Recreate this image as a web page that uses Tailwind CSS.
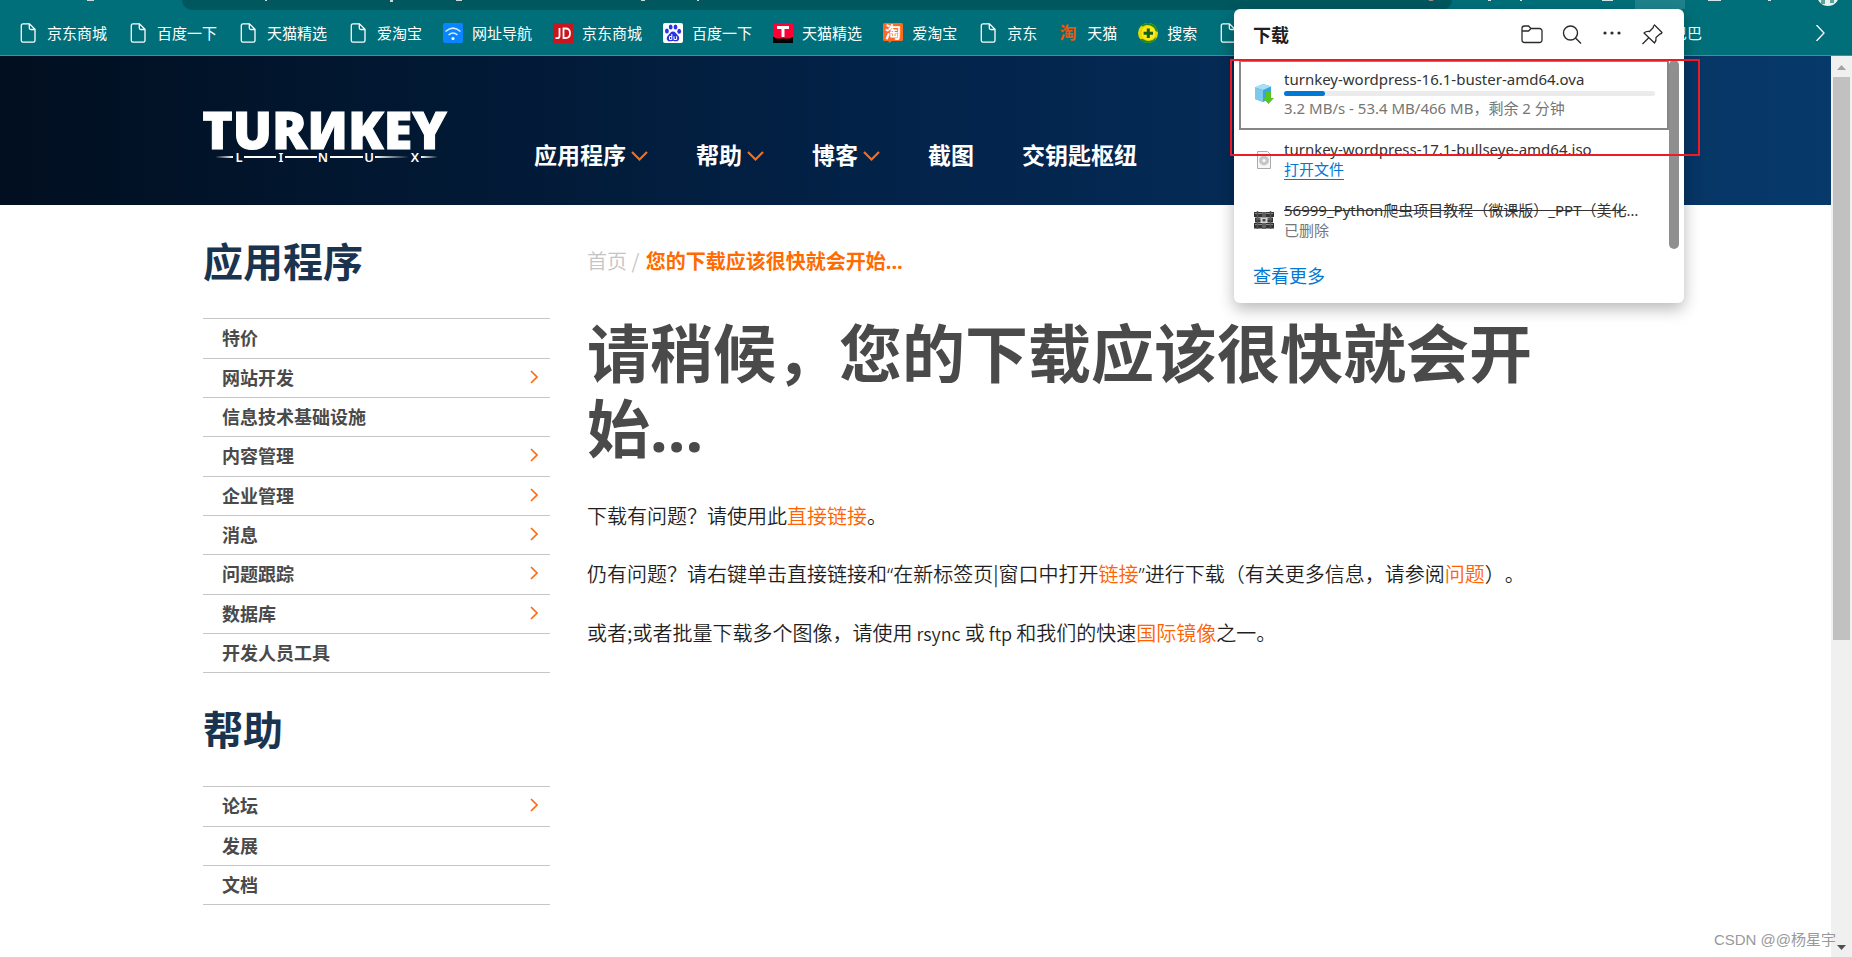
<!DOCTYPE html>
<html lang="zh-CN">
<head>
<meta charset="utf-8">
<meta name="viewport" content="width=device-width, initial-scale=1">
<title>TurnKey Linux - 下载</title>
<script src="https://cdn.jsdelivr.net/npm/@tailwindcss/browser@4"></script>
</head>
<body class="relative flex h-screen flex-col overflow-hidden bg-white font-['Noto_Sans_CJK_SC',sans-serif] text-[#1f1f1f]">

<!-- shared symbols -->
<svg class="hidden" aria-hidden="true">
  <symbol id="doc" viewBox="0 0 20 20"><path d="M5 .8h6.5L17 6.3V17.500a1.700 1.700 0 0 1-1.700 1.700H5a1.700 1.700 0 0 1-1.700-1.700v-15A1.700 1.700 0 0 1 5 .8zM11.300 1v4a1.500 1.500 0 0 0 1.500 1.500H17" fill="none" stroke="#fff" stroke-width="1.300"/></symbol>
  <symbol id="down" viewBox="0 0 17 10"><path d="M1 1l7.500 7.500L16 1" fill="none" stroke="#ff6b0f" stroke-width="2.200"/></symbol>
  <symbol id="right" viewBox="0 0 8 14"><path d="M1 1l6 6-6 6" fill="none" stroke="#ff6b0f" stroke-width="1.700"/></symbol>
</svg>

<!-- browser toolbar -->
<div class="h-[10px] shrink-0 bg-[#006f79] pr-[400px] pl-[182px]">
  <div class="h-full rounded-b-[14px] bg-[#00575e]"></div>
</div>
<div class="absolute top-0 right-[167px] h-[9px] w-[50px] bg-[#1f828b]"></div>
<svg class="absolute top-0 right-0 h-[8px] w-[460px]" viewBox="0 0 460 8" aria-hidden="true">
  <circle cx="39" cy="-3" r="4" fill="#b98f8f"/>
  <path d="M96 0h3v1h-3zM128 0h2v1h-2zM210 0h11v1h-11zM316 0h13v1h-13zM376 0h3v1h-3z" fill="#d5e5e7"/>
  <circle cx="436" cy="-5" r="11" fill="#e9f2ef"/><path d="M429 0h4v4h-4zM438 0h4v3h-4z" fill="#55a59b"/>
</svg>
<svg class="absolute top-0 left-0 h-[2px] w-[730px]" viewBox="0 0 730 2" aria-hidden="true"><path d="M87 0h7v1h-7zM265 0h2v1h-2zM390 0h3v2h-3zM456 0h6v1h-6zM641 0h4v1h-4zM697 0h2v1h-2z" fill="#c9d9da"/></svg>

<nav aria-label="收藏夹" class="flex h-[46px] shrink-0 items-center gap-[21px] overflow-hidden border-b border-[#3d9199] bg-[#006f79] pr-6 pl-[18px] text-[15px] leading-5 whitespace-nowrap text-white">
  <a href="#" class="flex items-center gap-[9px]"><svg class="size-5"><use href="#doc"/></svg>京东商城</a>
  <a href="#" class="flex items-center gap-[9px]"><svg class="size-5"><use href="#doc"/></svg>百度一下</a>
  <a href="#" class="flex items-center gap-[9px]"><svg class="size-5"><use href="#doc"/></svg>天猫精选</a>
  <a href="#" class="flex items-center gap-[9px]"><svg class="size-5"><use href="#doc"/></svg>爱淘宝</a>
  <a href="#" class="flex items-center gap-[9px]"><svg class="size-5" viewBox="0 0 20 20"><rect width="20" height="20" rx="2" fill="#0a84ff"/><path d="M2.500 8.500Q10 1.800 17.500 8.500M5.500 12Q10 8 14.500 12" fill="none" stroke="#d9ecff" stroke-width="1.500"/><circle cx="10" cy="15.500" r="1.500" fill="#fff"/></svg>网址导航</a>
  <a href="#" class="flex items-center gap-[9px]"><svg class="size-5" viewBox="0 0 20 20"><rect width="20" height="20" fill="#c9151e"/><path d="M6.500 5v8q0 2.200-2.200 2.200H2.500M10.500 5.500v9.500h2q4.500 0 4.500-4.800t-4.500-4.700z" fill="none" stroke="#fff" stroke-width="1.800"/></svg>京东商城</a>
  <a href="#" class="flex items-center gap-[9px]"><svg class="size-5" viewBox="0 0 20 20"><rect width="20" height="20" rx="2" fill="#fff"/><g fill="#2932e1"><ellipse cx="3.900" cy="8" rx="1.900" ry="2.500"/><ellipse cx="7.700" cy="4" rx="1.900" ry="2.600"/><ellipse cx="12.500" cy="4" rx="1.900" ry="2.600"/><ellipse cx="16.200" cy="8.300" rx="1.900" ry="2.500"/><path d="M10 8.500c2.200 0 3 2 5 4 2.400 2.500 1 5.800-1.700 5.800-1.500 0-2-.4-3.300-.4s-1.900.4-3.400.4c-2.700 0-4-3.300-1.600-5.800 2-2 2.800-4 5-4z"/></g><path d="M8.800 11v5.500H6.500v-3h2.300M11 13.300v3.200h2.600v-3.200" fill="none" stroke="#fff" stroke-width="1"/></svg>百度一下</a>
  <a href="#" class="flex items-center gap-[9px]"><svg class="size-5" viewBox="0 0 20 20"><rect width="20" height="20" fill="#ff0036"/><path d="M4 3h12v3h-4.500v8h-3V6H4z" fill="#fff"/><path d="M0 14h1l2 1.500h14l2-1.500h1v6H0z" fill="#000"/></svg>天猫精选</a>
  <a href="#" class="flex items-center gap-[9px]"><svg class="size-5" viewBox="0 0 20 20"><path d="M1.500 0h17A1.500 1.500 0 0 1 20 1.500v15a1.500 1.500 0 0 1-1.500 1.500H9l-3 2-.5-2h-4A1.500 1.500 0 0 1 0 16.500v-15A1.500 1.500 0 0 1 1.500 0z" fill="#fb6a22"/><text x="10" y="15" font-size="16" font-weight="700" text-anchor="middle" fill="#fff">淘</text></svg>爱淘宝</a>
  <a href="#" class="flex items-center gap-[9px]"><svg class="size-5"><use href="#doc"/></svg>京东</a>
  <a href="#" class="flex items-center gap-[9px]"><svg class="size-5" viewBox="0 0 20 20"><text x="10" y="16" font-size="17" font-weight="700" text-anchor="middle" fill="#e8590c">淘</text></svg>天猫</a>
  <a href="#" class="flex items-center gap-[9px]"><svg class="size-5" viewBox="0 0 20 20"><circle cx="10" cy="10" r="10" fill="#e8d800"/><path d="M3 3A10 10 0 0 1 20 9l-2.500-1A8 8 0 0 0 5 3.500zM2 16a10 10 0 0 0 15 1l1-3a9 9 0 0 1-13 2z" fill="#1f8a1c"/><circle cx="10.500" cy="10" r="7" fill="#ffe81a"/><path d="M8.800 5.500h3v3.200H15v3h-3.200V15h-3v-3.300H5.600v-3h3.200z" fill="#14601c"/></svg>搜索</a>
  <a href="#" aria-label="收藏" class="shrink-0"><svg class="size-5"><use href="#doc"/></svg></a>
  <a href="#" class="mr-[89px] ml-auto">阿里巴巴</a>
  <button type="button" aria-label="更多收藏" class="shrink-0"><svg class="h-4 w-4" viewBox="0 0 16 16"><path d="M4.500 0l7.500 8-7.500 8" fill="none" stroke="#fff" stroke-width="1.300"/></svg></button>
</nav>

<div class="flex min-h-0 flex-1">
  <div class="min-w-0 flex-1">
    <header class="h-[149px] bg-linear-to-r from-[#010f20] via-[#03234a] to-[#07396b]">
      <div class="mx-auto flex max-w-[1425px] items-start">
        <a href="#" aria-label="TurnKey Linux" class="mt-[54px] shrink-0">
          <svg class="h-[56px] w-[250px] font-['Noto_Sans']" viewBox="0 0 250 56" fill="#fff" stroke="#fff" stroke-width="0">
            <text x="-1" y="39" font-size="52" font-weight="900" stroke-width="1">TURИKEY</text>
            <g font-size="13" font-weight="600" text-anchor="middle"><text x="36" y="52">L</text><text x="78" y="52">I</text><text x="120" y="52">N</text><text x="166" y="52">U</text><text x="212" y="52">X</text></g>
            <path d="M12 47l18-1v2zM41 46h32v2H41zM82 46h32v2H82zM127 46h33v2h-33zM172 46l34 1-34 1zM218 46l17 1-17 1z"/>
          </svg>
        </a>
        <nav aria-label="主导航" class="mt-[82px] ml-[81px] flex gap-12 text-[23px] leading-8 font-bold whitespace-nowrap text-white">
          <a href="#" class="flex items-center gap-[5px]">应用程序<svg class="mt-1 h-[10px] w-[17px]"><use href="#down"/></svg></a>
          <a href="#" class="flex items-center gap-[5px]">帮助<svg class="mt-1 h-[10px] w-[17px]"><use href="#down"/></svg></a>
          <a href="#" class="flex items-center gap-[5px]">博客<svg class="mt-1 h-[10px] w-[17px]"><use href="#down"/></svg></a>
          <a href="#">截图</a>
          <a href="#">交钥匙枢纽</a>
        </nav>
      </div>
    </header>

    <div class="mx-auto flex max-w-[1425px] gap-[37px]">
      <aside class="w-[347px] shrink-0 text-[18px] leading-6 font-bold text-[#4a4a4a]">
        <h2 class="pt-[26px] pb-[29px] text-[40px] leading-[58px] text-[#1a344f]">应用程序</h2>
        <ul class="border-t border-[#c6c6c6] [&>li]:flex [&>li]:h-[39px] [&>li]:items-center [&>li]:justify-between [&>li]:border-b [&>li]:border-[#c6c6c6] [&>li]:pr-3 [&>li]:pb-[3px] [&>li]:pl-[19px] [&>li:nth-child(3n+1)]:h-[40px]">
          <li><a href="#">特价</a></li>
          <li><a href="#">网站开发</a><svg class="h-[14px] w-2"><use href="#right"/></svg></li>
          <li><a href="#">信息技术基础设施</a></li>
          <li><a href="#">内容管理</a><svg class="h-[14px] w-2"><use href="#right"/></svg></li>
          <li><a href="#">企业管理</a><svg class="h-[14px] w-2"><use href="#right"/></svg></li>
          <li><a href="#">消息</a><svg class="h-[14px] w-2"><use href="#right"/></svg></li>
          <li><a href="#">问题跟踪</a><svg class="h-[14px] w-2"><use href="#right"/></svg></li>
          <li><a href="#">数据库</a><svg class="h-[14px] w-2"><use href="#right"/></svg></li>
          <li><a href="#">开发人员工具</a></li>
        </ul>
        <h2 class="pt-[26px] pb-[29px] text-[40px] leading-[58px] text-[#1a344f]">帮助</h2>
        <ul class="border-t border-[#c6c6c6] [&>li]:flex [&>li]:h-[39px] [&>li]:items-center [&>li]:justify-between [&>li]:border-b [&>li]:border-[#c6c6c6] [&>li]:pr-3 [&>li]:pb-[3px] [&>li]:pl-[19px] [&>li:nth-child(3n+1)]:h-[40px]">
          <li><a href="#">论坛</a><svg class="h-[14px] w-2"><use href="#right"/></svg></li>
          <li><a href="#">发展</a></li>
          <li><a href="#">文档</a></li>
        </ul>
      </aside>

      <main class="min-w-0 flex-1 pt-[41px] text-[20px] leading-[30px] font-[350] [text-spacing-trim:space-all]">
        <p class="text-[#c4c4c4]"><a href="#">首页</a> <span class="mr-[2px]">/</span> <b class="font-bold text-[#ff6b00]">您的下载应该很快就会开始<span class="font-['Noto_Sans']">...</span></b></p>
        <h1 class="mt-[35px] text-[63px] leading-[75px] font-bold text-[#4a4a4a]">请稍候，您的下载应该很快就会开始<span class="font-['Noto_Sans']">...</span></h1>
        <p class="mt-9">下载有问题？请使用此<a href="#" class="text-[#ff6200]">直接链接</a>。</p>
        <p class="mt-7">仍有问题？请右键单击直接链接和<span class="font-['Noto_Sans']">“</span>在新标签页|窗口中打开<a href="#" class="text-[#ff6200]">链接</a><span class="font-['Noto_Sans']">”</span>进行下载（有关更多信息，请参阅<a href="#" class="text-[#ff6200]">问题</a>）。</p>
        <p class="mt-7">或者;或者批量下载多个图像，请使用<span class="text-[18px]"> rsync </span>或<span class="text-[18px]"> ftp </span>和我们的快速<a href="#" class="text-[#ff6200]">国际镜像</a>之一。</p>
      </main>
    </div>
  </div>

  <!-- page scrollbar -->
  <div class="flex w-[21px] shrink-0 flex-col items-center bg-[#f0f0f0]" aria-hidden="true">
    <svg class="h-[21px] w-full shrink-0" viewBox="0 0 21 21"><path d="M6 14l4.500-5 4.500 5z" fill="#a3a3a3"/></svg>
    <div class="w-[17px] bg-[#c1c1c1]" style="height:62.5%"></div>
    <svg class="mt-auto h-[21px] w-full shrink-0" viewBox="0 0 21 21"><path d="M6 9l4.500 5 4.500-5z" fill="#505050"/></svg>
  </div>
</div>

<!-- downloads flyout -->
<section aria-label="下载" class="absolute top-[9px] right-[168px] w-[450px] rounded-[6px] bg-white font-['Noto_Sans','Noto_Sans_CJK_SC',sans-serif] text-[15px] leading-5 shadow-[0_6px_16px_rgba(0,0,0,0.28)]">
  <div class="flex h-[51px] items-center pr-[21px] pl-[19px]">
    <h2 class="mr-auto text-[18px] font-bold">下载</h2>
    <div class="flex items-center gap-[18px]">
      <button type="button" aria-label="打开下载文件夹"><svg class="size-[22px]" viewBox="0 0 22 22" fill="none" stroke="#2b2b2b" stroke-width="1.300"><path d="M1 4.500A2.500 2.500 0 0 1 3.500 2h4l2.500 2.500h8.500A2.500 2.500 0 0 1 21 7v9a2.500 2.500 0 0 1-2.500 2.500h-15A2.500 2.500 0 0 1 1 16zM1 7h6.500L10 4.500"/></svg></button>
      <button type="button" aria-label="搜索"><svg class="size-[22px]" viewBox="0 0 22 22" fill="none" stroke="#2b2b2b" stroke-width="1.400"><circle cx="9.500" cy="9" r="7"/><path d="M14.500 14l5.500 5.500"/></svg></button>
      <button type="button" aria-label="更多"><svg class="size-[22px]" viewBox="0 0 22 22" fill="#2b2b2b"><circle cx="4" cy="9" r="1.600"/><circle cx="11" cy="9" r="1.600"/><circle cx="18" cy="9" r="1.600"/></svg></button>
      <button type="button" aria-label="固定"><svg class="size-[22px]" viewBox="0 0 22 22" fill="none" stroke="#2b2b2b" stroke-width="1.300" stroke-linejoin="round"><path d="M13.500 1l7.500 7.500q-.5 1.500-2 1.500l-4 3.500q.5 3.500-1.500 5.500l-10.500-10q2-2 5.500-1.500L12.300 3.500q-.2-1.500 1.200-2.500zM7.500 14l-6 6"/></svg></button>
    </div>
  </div>
  <div class="flex pl-[5px]">
    <ul class="min-w-0 flex-1">
      <li class="flex h-[70px] items-center gap-[10px] border-2 border-[#868686] pr-3 pb-[3px] pl-[13px]">
        <svg class="size-5 shrink-0" viewBox="0 0 20 20"><path d="M1 3.500L9 0l8 2.500v12L9 18l-8-3z" fill="#3ba4dd"/><path d="M1 3.500L9 0l8 2.500L9 6z" fill="#a5e0f7"/><path d="M1 3.500L9 6v12l-8-3z" fill="#7cc9ee"/><path d="M12 8h5v6h3l-5.500 6L9 14h3z" fill="#58c322"/></svg>
        <div class="min-w-0 flex-1">
          <p class="truncate text-[#333]">turnkey-wordpress-16.1-buster-amd64.ova</p>
          <div role="progressbar" aria-valuenow="11" aria-valuemin="0" aria-valuemax="100" class="my-[2px] h-[5px] rounded-full bg-[#ebebeb]"><div class="h-full rounded-full bg-[#0078d4]" style="width:11%"></div></div>
          <p class="text-[#767676]">3.2 MB/s - 53.4 MB/466 MB，剩余 2 分钟</p>
        </div>
      </li>
      <li class="flex h-[62px] items-end gap-[10px] pr-[14px] pl-[15px]">
        <svg class="mb-[22px] size-5 shrink-0" viewBox="0 0 20 20"><path d="M3.500 1.500h10l3 3v14h-13z" fill="#f7f7f7" stroke="#aaa"/><circle cx="10" cy="10.500" r="5" fill="#c4c8c8"/><circle cx="10" cy="10.500" r="1.500" fill="#fff"/></svg>
        <div class="min-w-0 flex-1 pb-3">
          <p class="truncate text-[#333]">turnkey-wordpress-17.1-bullseye-amd64.iso</p>
          <a href="#" class="inline-block border-b border-[#0078d4] text-[#0078d4]">打开文件</a>
        </div>
      </li>
      <li class="flex h-[57px] items-center gap-[10px] pr-[26px] pb-[2px] pl-[15px]">
        <svg class="size-5 shrink-0" viewBox="0 0 20 20"><path d="M0 2h20v5H0zM1 7.500h18v5H1zM0 13h20v5.500H0z" fill="#333"/><path d="M1 3.500h18M2 9h16M1 14.500h18" stroke="#8a8a8a" stroke-width="1"/><path d="M3.500 1v18M16.500 1v18" stroke="#555" stroke-width="1.500"/><path d="M8 2h4v17H8z" fill="#5f5f5f"/><rect x="6.500" y="7.500" width="7" height="5.500" fill="#d5d5d5"/><rect x="8.500" y="9" width="3" height="2.500" fill="#444"/></svg>
        <div class="min-w-0 flex-1">
          <p class="truncate text-[#333] line-through">56999_Python爬虫项目教程（微课版）_PPT（美化版）.rar</p>
          <p class="text-[#767676]">已删除</p>
        </div>
      </li>
    </ul>
    <div class="mr-[5px] w-[10px] rounded-full bg-[#8f8f8f]" aria-hidden="true"></div>
  </div>
  <p class="flex h-[54px] items-center pl-[19px] text-[18px]"><a href="#" class="text-[#0078d4]">查看更多</a></p>
</section>

<!-- highlight frame -->
<div class="pointer-events-none absolute top-[59px] right-[152px] h-[97px] w-[470px] border-2 border-[#ed1c24]"></div>

<p class="absolute right-4 bottom-[5px] font-['Liberation_Sans','Noto_Sans_CJK_SC',sans-serif] text-[15px] leading-6 text-[#999]">CSDN @@杨星宇</p>
</body>
</html>
